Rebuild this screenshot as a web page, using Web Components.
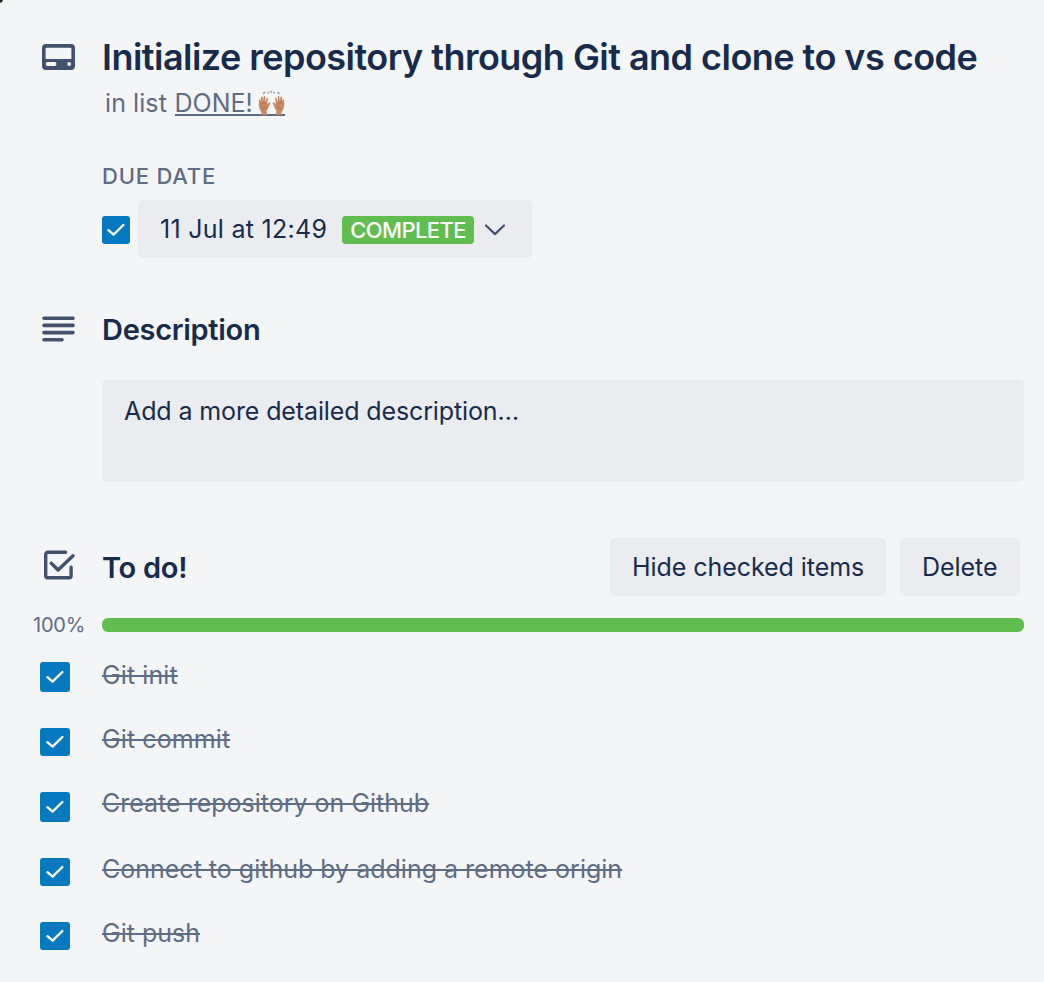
<!DOCTYPE html>
<html lang="en">
<head>
<meta charset="utf-8">
<title>Card</title>
<style>
html,body{margin:0;background:#f4f5f7}
body{width:1044px;height:982px;overflow:hidden;font-family:Inter,"Liberation Sans",sans-serif;color:#172b4d;font-size:25px}
</style>
</head>
<body>
<card-window></card-window>
<script>
const define = (name, html) => {
  const t = document.createElement('template');
  t.innerHTML = html;
  customElements.define(name, class extends HTMLElement {
    constructor() {
      super();
      this.attachShadow({mode: 'open'}).append(t.content.cloneNode(true));
    }
  });
};

define('check-box', `
<style>
:host{display:flex;align-items:center;justify-content:center;width:var(--w,30px);height:var(--h,28px);background:#0579bf;border-radius:3px;box-sizing:border-box;flex:none}
svg{display:block}
</style>
<svg width="20" height="16" viewBox="0 0 20 16" fill="none" stroke="#fff" stroke-width="2.4" stroke-linecap="round" stroke-linejoin="round"><path d="M2.4 8.2 7.6 12.6 17.4 3"/></svg>`);

define('card-button', `
<style>
:host{display:flex;align-items:center;height:58px;box-sizing:border-box;padding:0 22px;background:#ebecf0;border-radius:5px;white-space:nowrap;flex:none}
</style><slot></slot>`);

define('card-header', `
<style>
:host{display:grid;grid-template-columns:102px 1fr;height:118px;padding-top:32px;box-sizing:border-box}
svg{display:block}
.icon{padding:12px 0 0 42px}
h1{margin:0;font-size:36px;font-weight:600;line-height:50px;white-space:nowrap;letter-spacing:-.53px}
.sub{display:flex;align-items:flex-start;margin-left:3px;padding-top:6px;line-height:30px;color:#5e6c84;white-space:pre}
.in{width:69.5px;letter-spacing:.08px}
.link{display:flex;height:28px;box-sizing:border-box;border-bottom:2px solid #5e6c84}
.link svg{margin:2px 0 -2px 5.5px}
</style>
<div class="icon"><svg width="33" height="26" viewBox="0 0 33 26"><path fill="#42526e" fill-rule="evenodd" d="M4 0h25a4 4 0 0 1 4 4v18a4 4 0 0 1-4 4H4a4 4 0 0 1-4-4V4a4 4 0 0 1 4-4Zm-.4 4.5v10.4h25.8V4.5a.8.8 0 0 0-.8-.8H4.4a.8.8 0 0 0-.8.8ZM5.6 18.1a1.9 1.9 0 0 0 0 3.8h7a1.9 1.9 0 0 0 0-3.8ZM27.2 18.1a1.9 1.9 0 1 0 .01 0Z"/></svg></div>
<div><h1><slot></slot></h1>
<div class="sub"><span class="in">in list </span><span class="link"><span>DONE!</span><svg width="27" height="26" viewBox="0 0 27 26" role="img" aria-label="raising hands"><g fill="none" stroke="#999da2" stroke-width="1.7"><path d="m5 3.8 2-1.5m3.2-.4.6 1.4M13.3.8v2m3.2-1-.7 1.5m3.8-1.2L21.5 4"/></g><path fill="#c98762" d="M4.1 25c-.2-3-3.2-6-3.3-9.5l.1-5.3c0-1.2 1.4-1.2 1.5 0l.3 2.3.3-5c.1-1.3 1.6-1.3 1.7 0l.3 4.5.6-5.1c.2-1.2 1.7-1 1.7.2l-.2 5.4 1.3-4.1c.4-1 1.7-.6 1.5.5l-1 5.5c.8-1 1.5-1.8 2.7-1.9.9 0 1 .9.5 1.6-1.5 2.1-1.5 4.4-3.4 6.2L8.9 25Z"/><path fill="none" stroke="#a9653f" stroke-width=".6" d="M2.8 12v2m2.3-2.5V14m2.2-2v2.3M3.8 19c1.6-1.5 3-1.6 4.7-.7"/><g transform="matrix(-1 0 0 1 27 0)"><path fill="#c98762" d="M4.1 25c-.2-3-3.2-6-3.3-9.5l.1-5.3c0-1.2 1.4-1.2 1.5 0l.3 2.3.3-5c.1-1.3 1.6-1.3 1.7 0l.3 4.5.6-5.1c.2-1.2 1.7-1 1.7.2l-.2 5.4 1.3-4.1c.4-1 1.7-.6 1.5.5l-1 5.5c.8-1 1.5-1.8 2.7-1.9.9 0 1 .9.5 1.6-1.5 2.1-1.5 4.4-3.4 6.2L8.9 25Z"/><path fill="none" stroke="#a9653f" stroke-width=".6" d="M2.8 12v2m2.3-2.5V14m2.2-2v2.3M3.8 19c1.6-1.5 3-1.6 4.7-.7"/></g></svg></span></div></div>`);

define('due-date', `
<style>
:host{display:block;padding:43px 0 0 102px;height:140px;box-sizing:border-box}
.label{font-size:22px;font-weight:500;line-height:30px;color:#5e6c84;letter-spacing:.8px}
.row{display:flex;align-items:center;gap:8px;margin-top:9px}
check-box{--w:28px;margin-top:2px}
card-button{width:394px}
.date{white-space:nowrap;width:182px;letter-spacing:.28px}
.badge{display:flex;align-items:center;justify-content:center;width:132px;height:28px;margin-top:2px;background:#61bd4f;color:#fff;border-radius:4px;font-size:22px;font-weight:500;letter-spacing:-.6px}
svg{margin-left:10px;margin-top:2px}
</style>
<div class="label"><span>DUE DATE</span></div>
<div class="row"><check-box></check-box><card-button><span class="date">11 Jul at 12:49</span><span class="badge">COMPLETE</span><svg width="22" height="14" viewBox="0 0 22 14" fill="none" stroke="#42526e" stroke-width="2.2" stroke-linecap="round" stroke-linejoin="round"><path d="m2 2.5 9 8.6 9-8.6"/></svg></card-button></div>`);

define('section-heading', `
<style>
:host{display:flex;align-items:center;height:58px}
.icon{width:102px;box-sizing:border-box;padding-left:42px;flex:none}
h2{flex:1;margin:0;padding-top:var(--drop,0);font-size:29px;font-weight:600;line-height:40px;white-space:nowrap;letter-spacing:-.29px}
.actions{display:flex;gap:14px;padding-right:24px}
</style>
<div class="icon"><slot name="icon"></slot></div><h2><slot></slot></h2><div class="actions"><slot name="actions"></slot></div>`);

define('description-box', `
<style>
:host{display:block;height:102px;box-sizing:border-box;margin:21px 20px 0 102px;padding:16px 22px;background:#ebecf0;border-radius:5px;line-height:30px;letter-spacing:-.12px}
</style><slot></slot>`);

define('progress-line', `
<style>
:host{display:flex;align-items:center;height:30px;margin-top:14px;padding-right:20px;color:#5e6c84;font-size:20px;letter-spacing:-.2px}
.pct{width:102px;box-sizing:border-box;padding-left:33px;flex:none}
.bar{flex:1;height:14px;border-radius:6px;background:#61bd4f}
</style>
<div class="pct"><slot></slot></div><div class="bar"></div>`);

define('todo-item', `
<style>
:host{display:grid;grid-template-columns:62px 1fr;align-items:start;height:64px;padding-left:40px;line-height:30px;color:#5e6c84}
:host(.big){--h:30px}
:host(.short){letter-spacing:.1px}
check-box{margin-top:var(--top,4px)}
.t{text-decoration:line-through;text-decoration-thickness:2px;white-space:nowrap}
</style>
<check-box></check-box><div><span class="t"><slot></slot></span></div>`);

define('card-window', `
<style>
:host{display:block;background:radial-gradient(circle at 0 0,#222 2px,#22222200 3.5px) 0 0/5px 5px no-repeat #f4f5f7;height:982px}
#desc{margin-top:43px}
#desc svg{margin-bottom:2px}
#todo{margin-top:56px;--drop:2px}
#todo svg{margin-bottom:6px}
#todo card-button{letter-spacing:-.06px}
svg{display:block}
.list{margin-top:20px}
</style>
<card-header><span>Initialize repository through Git and clone to vs code</span></card-header>
<due-date></due-date>
<section-heading id="desc"><svg slot="icon" width="33" height="26" viewBox="0 0 33 26" stroke="#42526e" stroke-width="3.6" stroke-linecap="round"><path d="M2 2.2h29M2 9.4h29M2 16.6h29M2 23.8h18"/></svg><span>Description</span></section-heading>
<description-box><span>Add a more detailed description…</span></description-box>
<section-heading id="todo"><svg slot="icon" width="34" height="32" viewBox="0 0 34 32" fill="none" stroke="#42526e" stroke-width="3.4" stroke-linecap="round" stroke-linejoin="round"><path d="M23.6 4.3H5.7a2 2 0 0 0-2 2v21.4a2 2 0 0 0 2 2h21.4a2 2 0 0 0 2-2V19.2M9.3 15.3l6.8 6.7L31 7.7"/></svg><span>To do!</span><card-button slot="actions" style="width:276px"><span>Hide checked items</span></card-button><card-button slot="actions" style="width:120px"><span>Delete</span></card-button></section-heading>
<progress-line><span>100%</span></progress-line>
<div class="list">
<todo-item class="big short" style="--top:2px"><span>Git init</span></todo-item>
<todo-item class="short"><span>Git commit</span></todo-item>
<todo-item class="big" style="height:66px"><span>Create repository on Github</span></todo-item>
<todo-item><span>Connect to github by adding a remote origin</span></todo-item>
<todo-item><span>Git push</span></todo-item>
</div>`);
</script>
</body>
</html>
